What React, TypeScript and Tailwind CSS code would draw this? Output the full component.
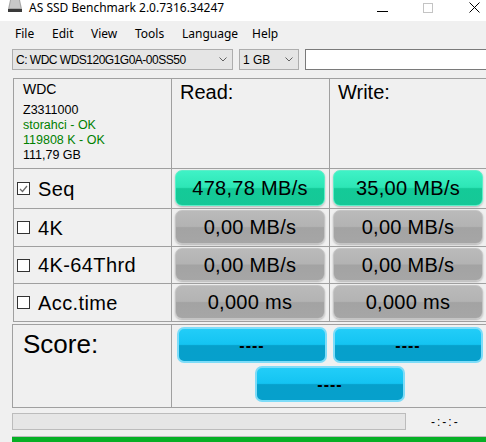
import React from "react";

const font = "font-['Liberation_Sans',Arial,sans-serif]";

const green = "border-[#5eeec8] bg-[linear-gradient(to_bottom,#3ff2c6_0%,#2de6b6_48%,#14ca98_52%,#16c897_100%)]";
const gray = "border-[#c4c4c4] bg-[linear-gradient(to_bottom,#bababa_0%,#b3b3b3_48%,#a3a3a3_52%,#a6a6a6_100%)]";
const blue = "border-[#7ddcf8] bg-[linear-gradient(to_bottom,#22cdf8_0%,#14c4f2_48%,#06a0cb_52%,#06a0cc_100%)]";

function Chevron() {
  return (
    <svg width="8" height="5" viewBox="0 0 8 5" className="shrink-0">
      <polyline points="0.5,0.5 4,4 7.5,0.5" fill="none" stroke="#606060" strokeWidth="1" />
    </svg>
  );
}

function Check({ checked }: { checked?: boolean }) {
  return (
    <div className="w-[13px] h-[13px] border border-[#333] bg-white flex items-center justify-center shrink-0">
      {checked && (
        <svg width="9" height="8" viewBox="0 0 9 8">
          <polyline points="1,4 3.5,6.5 8,1" fill="none" stroke="#6a6a6a" strokeWidth="1.3" />
        </svg>
      )}
    </div>
  );
}

function Value({ text, cls }: { text: string; cls: string }) {
  return (
    <div className={`h-full rounded-[7px] border shadow-[0_1px_2px_rgba(0,0,0,0.25)] flex items-center justify-center text-[20px] text-black tracking-[0.3px] ${cls}`}>
      {text}
    </div>
  );
}

const rows = [
  { label: "Seq", checked: true, read: "478,78 MB/s", write: "35,00 MB/s", h: "h-[40px]", c: green },
  { label: "4K", read: "0,00 MB/s", write: "0,00 MB/s", h: "h-[38px]", c: gray },
  { label: "4K-64Thrd", read: "0,00 MB/s", write: "0,00 MB/s", h: "h-[37px]", c: gray },
  { label: "Acc.time", read: "0,000 ms", write: "0,000 ms", h: "h-[38px]", c: gray },
];

function ScoreBtn({ w }: { w: string }) {
  return (
    <div className={`${w} h-[36px] rounded-[7px] border-2 ${blue} flex items-end justify-center pb-[7px] text-[16px] font-bold leading-none tracking-[1px]`}>
      ----
    </div>
  );
}

export default function App() {
  return (
    <div className={`w-[486px] h-[442px] overflow-hidden bg-[#f0f0f0] flex flex-col ${font}`}>
      {/* title bar */}
      <div className="h-[21px] bg-white flex items-start shrink-0 font-['Noto_Sans',sans-serif] text-[12px] text-black">
        <svg width="16" height="13" viewBox="0 0 16 13" className="ml-[7px] shrink-0">
          <path d="M3 0 H13 L15 9 H1 Z" fill="#a8a8a8" />
          <path d="M4 0 H12 L13.5 8 H2.5 Z" fill="#c8c8c8" />
          <rect x="1" y="9" width="14" height="3" fill="#3a3a3a" />
        </svg>
        <span className="ml-[6px] leading-[15px]">AS SSD Benchmark 2.0.7316.34247</span>
        <div className="ml-auto mr-[-11px] flex shrink-0">
          <div className="w-[46px] h-[16px] flex items-center justify-center">
            <div className="w-[11px] h-px bg-black mt-[6px]" />
          </div>
          <div className="w-[46px] h-[16px] flex items-center justify-center">
            <div className="w-[10px] h-[10px] border border-[#c4c4c4] mt-[-1px]" />
          </div>
          <div className="w-[46px] h-[16px] flex items-center justify-center">
            <svg width="11" height="11" viewBox="0 0 11 11" className="mt-[-1px]">
              <path d="M0.5 0.5 L10.5 10.5 M10.5 0.5 L0.5 10.5" stroke="#000" strokeWidth="1" />
            </svg>
          </div>
        </div>
      </div>

      {/* menu */}
      <div className="h-[25px] pt-[1px] flex items-center pl-[15px] text-[12px] text-black shrink-0 font-['Noto_Sans',sans-serif]">
        <span className="w-[37px]">File</span>
        <span className="w-[39px]">Edit</span>
        <span className="w-[44px]">View</span>
        <span className="w-[47px]">Tools</span>
        <span className="w-[70px]">Language</span>
        <span>Help</span>
      </div>

      {/* selectors */}
      <div className="mt-[3px] h-[21px] flex pl-[12px] gap-[6px] shrink-0 text-[12px] text-black">
        <div className="w-[221px] shrink-0 border border-[#adadad] bg-[#e5e5e5] flex items-center pl-[3px] pr-[5px] tracking-[-0.5px]">
          <span className="flex-1">C: WDC WDS120G1G0A-00SS50</span>
          <Chevron />
        </div>
        <div className="w-[60px] shrink-0 border border-[#adadad] bg-[#e5e5e5] flex items-center pl-[3px] pr-[5px]">
          <span className="flex-1">1 GB</span>
          <Chevron />
        </div>
        <div className="w-[200px] shrink-0 border border-[#7a7a7a] bg-white" />
      </div>

      {/* results grid */}
      <div className="mt-[8px] ml-[13px] w-[480px] shrink-0 border-t border-l border-[#a0a0a0]">
        <div className="grid grid-cols-[158px_158px_158px] h-[90px]">
          <div className="border-r border-b border-[#a0a0a0] pl-[9px] pt-[1px] text-black">
            <div className="text-[14px] leading-[18px]">WDC</div>
            <div className="text-[12.5px] leading-[15px] mt-[5px]">
              <div>Z3311000</div>
              <div className="text-[#008000]">storahci - OK</div>
              <div className="text-[#008000]">119808 K - OK</div>
              <div>111,79 GB</div>
            </div>
          </div>
          <div className="border-r border-b border-[#a0a0a0] pl-[8px] text-[20px] leading-[24px] pt-[1px]">Read:</div>
          <div className="border-r border-b border-[#a0a0a0] pl-[8px] text-[20px] leading-[24px] pt-[1px]">Write:</div>
        </div>
        {rows.map((r) => (
          <div key={r.label} className={`grid grid-cols-[158px_158px_158px] ${r.h}`}>
            <div className="border-r border-b border-[#a0a0a0] flex items-center pl-[3px] gap-[8px] text-[20px] tracking-[0.4px]">
              <Check checked={r.checked} />
              <span>{r.label}</span>
            </div>
            <div className="border-r border-b border-[#a0a0a0] pl-[3px] pr-[4px] pt-[1px] pb-[2px]">
              <Value text={r.read} cls={r.c} />
            </div>
            <div className="border-r border-b border-[#a0a0a0] pl-[3px] pr-[4px] pt-[1px] pb-[2px]">
              <Value text={r.write} cls={r.c} />
            </div>
          </div>
        ))}
      </div>

      {/* score */}
      <div className="mt-[2px] ml-[12px] w-[480px] h-[84px] shrink-0 border border-[#a0a0a0] flex">
        <div className="w-[159px] border-r border-[#a0a0a0] pl-[10px] pt-[4px] text-[26px] leading-[30px]">Score:</div>
        <div className="flex flex-col pl-[5px] pt-[2px] gap-[3px]">
          <div className="flex gap-[6px]">
            <ScoreBtn w="w-[150px]" />
            <ScoreBtn w="w-[150px]" />
          </div>
          <div className="flex pl-[78px]">
            <ScoreBtn w="w-[150px]" />
          </div>
        </div>
      </div>

      {/* progress */}
      <div className="mt-[5px] ml-[12px] h-[17px] flex items-center shrink-0">
        <div className="w-[394px] h-full border border-[#bcbcbc] bg-[#e6e6e6]" />
        <span className="ml-[25px] text-[12px] tracking-[2px]">-:-:-</span>
      </div>
      <div className="mt-[6px] ml-[12px] h-[10px] border-t border-[#bcbcbc] bg-[#06b025]" />
    </div>
  );
}
